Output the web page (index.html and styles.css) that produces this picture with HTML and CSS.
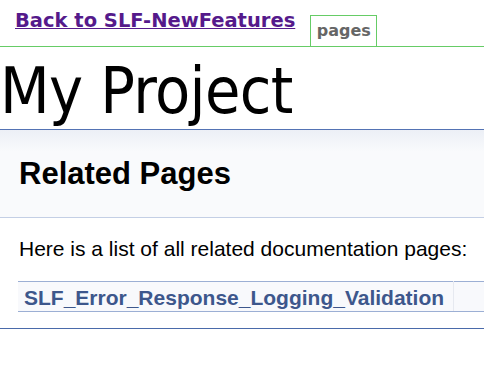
FILE: index.html
```html
<!DOCTYPE html>
<html>
<head>
<meta charset="utf-8">
<link rel="stylesheet" href="styles.css">
</head>
<body>
<div class="topnav">
  <a class="back" href="#">Back to SLF-NewFeatures</a>
  <span class="tab">pages</span>
</div>
<div class="projecttitle">My Project</div>
<div class="header">
  <div class="headertitle">Related Pages</div>
</div>
<div class="contents">
  <div class="textblock">Here is a list of all related documentation pages:</div>
  <table class="directory">
    <tr>
      <td class="entry"><a class="el" href="#">SLF_Error_Response_Logging_Validation</a></td>
      <td class="desc"></td>
    </tr>
  </table>
</div>
<div class="footer"></div>
</body>
</html>
```

FILE: styles.css
```css
html, body {
  margin: 0;
  padding: 0;
  background: #ffffff;
}

body {
  font-family: "Liberation Sans", Arial, sans-serif;
  color: #000;
}

.topnav {
  display: flex;
  align-items: flex-end;
  height: 46px;
  padding-left: 15px;
  border-bottom: 1px solid #66cc66;
  box-sizing: content-box;
}

.back {
  font-family: "DejaVu Sans", Verdana, sans-serif;
  font-weight: bold;
  font-size: 19.5px;
  color: #551a8b;
  text-decoration: underline;
  line-height: 22px;
  margin-bottom: 14px;
}

.tab {
  margin-left: 15px;
  height: 31px;
  width: 67px;
  border: 1px solid #66cc66;
  border-bottom: none;
  font-family: "DejaVu Sans", Verdana, sans-serif;
  font-weight: bold;
  font-size: 16px;
  color: #666666;
  display: flex;
  align-items: flex-end;
  justify-content: center;
  padding-bottom: 6px;
  box-sizing: border-box;
  line-height: 18px;
}

.projecttitle {
  font-family: "DejaVu Sans Condensed", "DejaVu Sans", Tahoma, sans-serif;
  font-stretch: condensed;
  font-size: 64px;
  letter-spacing: -0.6px;
  line-height: 82px;
  height: 79px;
  padding-top: 3px;
  border-bottom: 1px solid #5373b4;
  white-space: nowrap;
  overflow: hidden;
}

.header {
  height: 88px;
  background: linear-gradient(#eceff6 0px, #f9fafc 22px, #f9fafc 100%);
  border-bottom: 1px solid #c4cfe5;
  padding-left: 19px;
  display: flex;
  align-items: center;
  box-sizing: border-box;
}

.headertitle {
  font-weight: bold;
  font-size: 31px;
  line-height: 36px;
}

.contents {
  padding-left: 18px;
  padding-top: 19px;
  padding-bottom: 16px;
}

.textblock {
  font-size: 21px;
  line-height: 24px;
  padding-left: 1px;
}

.directory {
  margin-top: 20px;
  border-collapse: collapse;
  width: calc(100% + 10px);
}

.directory td {
  padding: 5px 0 0 0;
  background: #f8f9fc;
  border-top: 1px solid #9cafd4;
  border-bottom: 1px solid #9cafd4;
  line-height: 22px;
}

.directory .entry {
  padding-left: 6px;
  padding-right: 9px;
  border-right: 1px solid #e6e9f0;
  white-space: nowrap;
  width: 1px;
}

.el {
  font-weight: bold;
  font-size: 21px;
  color: #3d578c;
  text-decoration: none;
}

.footer {
  border-top: 1px solid #4a6aaa;
  height: 50px;
}
```
